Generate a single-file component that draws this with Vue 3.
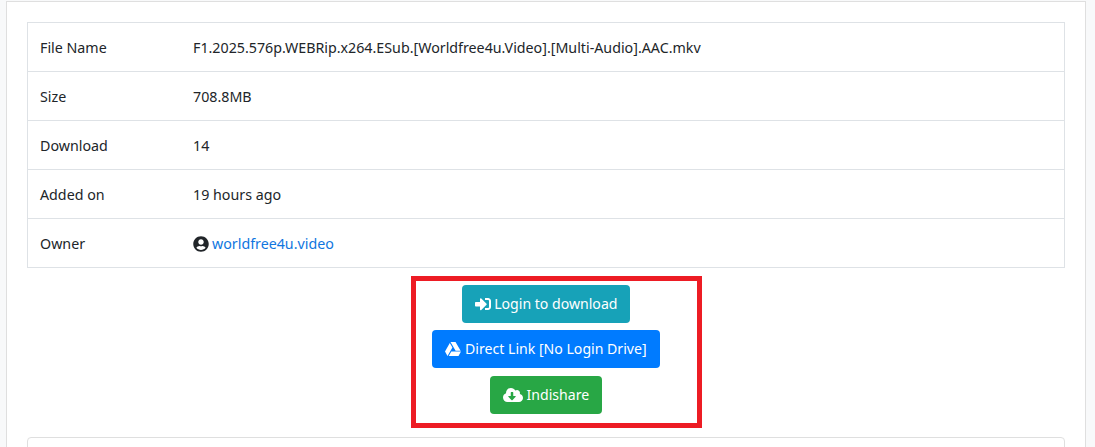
<script setup>
const rows = [
  { label: 'File Name', value: 'F1.2025.576p.WEBRip.x264.ESub.[Worldfree4u.Video].[Multi-Audio].AAC.mkv' },
  { label: 'Size', value: '708.8MB' },
  { label: 'Download', value: '14' },
  { label: 'Added on', value: '19 hours ago' },
]
</script>

<template>
  <div class="page">
    <div class="card">
      <table class="info">
        <tbody>
          <tr v-for="row in rows" :key="row.label">
            <td class="label">{{ row.label }}</td>
            <td>{{ row.value }}</td>
          </tr>
          <tr>
            <td class="label">Owner</td>
            <td>
              <svg class="icon" viewBox="0 0 496 512"><path fill="currentColor" d="M248 8C111 8 0 119 0 256s111 248 248 248 248-111 248-248S385 8 248 8zm0 96c48.6 0 88 39.4 88 88s-39.4 88-88 88-88-39.4-88-88 39.4-88 88-88zm0 344c-58.7 0-111.3-26.6-146.5-68.2 18.8-35.4 55.6-59.8 98.5-59.8 2.4 0 4.8.4 7.1 1.1 13 4.2 26.6 6.9 40.9 6.9 14.3 0 28-2.7 40.9-6.9 2.3-.7 4.7-1.1 7.1-1.1 42.9 0 79.7 24.4 98.5 59.8C359.3 421.4 306.7 448 248 448z"/></svg>
              <a class="link" href="#">worldfree4u.video</a>
            </td>
          </tr>
        </tbody>
      </table>

      <div class="actions">
        <a class="btn btn-info" href="#">
          <svg class="icon" viewBox="0 0 512 512"><path fill="currentColor" d="M416 448h-84c-6.6 0-12-5.4-12-12v-40c0-6.6 5.4-12 12-12h84c17.7 0 32-14.3 32-32V160c0-17.7-14.3-32-32-32h-84c-6.6 0-12-5.4-12-12V76c0-6.6 5.4-12 12-12h84c53 0 96 43 96 96v192c0 53-43 96-96 96zm-47-201L201 79c-15-15-41-4.5-41 17v96H24c-13.3 0-24 10.7-24 24v96c0 13.3 10.7 24 24 24h136v96c0 21.5 26 32 41 17l168-168c9.3-9.4 9.3-24.6 0-34z"/></svg>
          Login to download
        </a>
        <a class="btn btn-primary" href="#">
          <svg class="icon" viewBox="0 0 512 512"><path fill="currentColor" d="M339 314.9L175.4 32h161.2l163.6 282.9H339zm-137.5 23.6L120.9 480h310.5L512 338.5H201.5zM154.1 67.4L0 338.5 80.6 480 237 208.8 154.1 67.4z"/></svg>
          Direct Link [No Login Drive]
        </a>
        <a class="btn btn-success" href="#">
          <svg class="icon icon-wide" viewBox="0 0 640 512"><path fill="currentColor" d="M537.6 226.6c4.1-10.7 6.4-22.4 6.4-34.6 0-53-43-96-96-96-19.7 0-38.1 6-53.3 16.2C367 64.2 315.3 32 256 32c-88.4 0-160 71.6-160 160 0 2.7.1 5.4.2 8.1C40.2 219.8 0 273.2 0 336c0 79.5 64.5 144 144 144h368c70.7 0 128-57.3 128-128 0-61.9-44-113.6-102.4-125.4zm-132.9 88.7L299.3 420.7c-6.2 6.2-16.4 6.2-22.6 0L171.3 315.3c-10.1-10.1-2.9-27.3 11.3-27.3H248V176c0-8.8 7.2-16 16-16h48c8.8 0 16 7.2 16 16v112h65.4c14.2 0 21.4 17.2 11.3 27.3z"/></svg>
          Indishare
        </a>
        <div class="highlight"></div>
      </div>

      <div class="next-card"></div>
    </div>
  </div>
</template>

<style>
html, body {
  margin: 0;
  background: #f8f9fa;
  overflow: hidden;
}
</style>

<style scoped>
.page {
  height: 447px;
  overflow: hidden;
  padding: 1px 9px 0 6px;
  box-sizing: border-box;
  font-family: "Noto Sans", sans-serif;
  font-size: 14.25px;
  line-height: 24px;
  color: #212529;
}

.card {
  background: #fff;
  border: 1px solid #dfdfdf;
  padding: 20px;
  height: 500px;
}

.info {
  width: 100%;
  border-collapse: collapse;
  border: 1px solid #dee2e6;
}

.info td {
  padding: 13px 12px 11px;
  border-top: 1px solid #dee2e6;
}

.label {
  width: 129px;
}

.icon {
  display: inline-block;
  width: 16px;
  height: 16px;
  vertical-align: -3px;
}

.icon-wide {
  width: 20px;
}

.link {
  margin-left: 3px;
  color: #0f76e0;
  text-decoration: none;
}

.actions {
  position: relative;
  display: flex;
  flex-direction: column;
  align-items: center;
  gap: 7.3px;
  margin-top: 17px;
}

.btn {
  display: block;
  height: 38px;
  padding: 7px 13px;
  box-sizing: border-box;
  border-radius: 4px;
  font-size: 14.1px;
  color: #fff;
  text-decoration: none;
  white-space: nowrap;
}

.btn-info { background: #17a2b8; }
.btn-primary { background: #007bff; }
.btn-success { background: #28a745; }

.highlight {
  position: absolute;
  top: -9px;
  left: 384px;
  width: 281px;
  height: 142px;
  border: 5px solid #ed1c24;
}

.next-card {
  margin-top: 23.4px;
  height: 60px;
  border: 1px solid #dfdfdf;
  border-radius: 4px;
}
</style>
